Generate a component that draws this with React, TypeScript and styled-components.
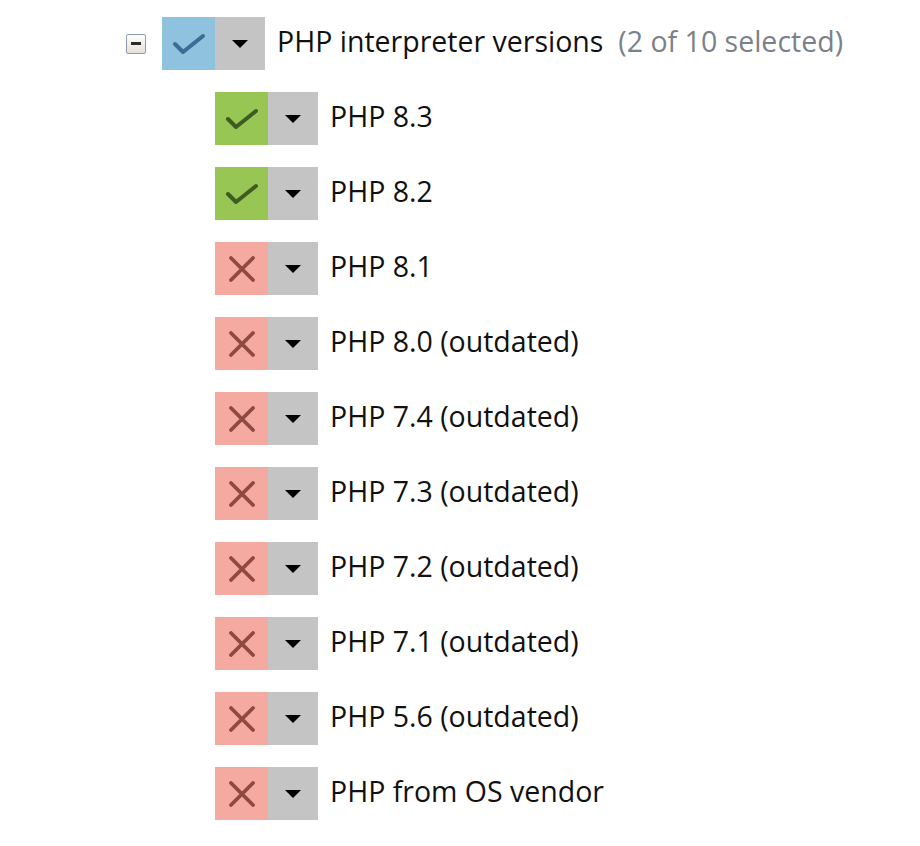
import React from "react";
import styled, { createGlobalStyle } from "styled-components";

type State = "on" | "off" | "partial";

const versions: { label: string; state: State }[] = [
    { label: "PHP 8.3", state: "on" },
    { label: "PHP 8.2", state: "on" },
    { label: "PHP 8.1", state: "off" },
    { label: "PHP 8.0 (outdated)", state: "off" },
    { label: "PHP 7.4 (outdated)", state: "off" },
    { label: "PHP 7.3 (outdated)", state: "off" },
    { label: "PHP 7.2 (outdated)", state: "off" },
    { label: "PHP 7.1 (outdated)", state: "off" },
    { label: "PHP 5.6 (outdated)", state: "off" },
    { label: "PHP from OS vendor", state: "off" },
]

const colors: Record<State, { bg: string; mark: string }> = {
    on: { bg: "#98c655", mark: "#3e5b22" },
    off: { bg: "#f4a9a1", mark: "#8e4a42" },
    partial: { bg: "#8fc2de", mark: "#3a6d95" },
}

const Mark = ({ state }: { state: State }) => {
    const color = colors[state].mark
    if (state === "off") {
        return (
            <svg width="26" height="26" viewBox="0 0 26 26">
                <path d="M2 2 L24 24 M24 2 L2 24" stroke={color} strokeWidth="3.8" strokeLinecap="round" fill="none" />
            </svg>
        )
    }
    return (
        <svg width="34" height="22" viewBox="0 0 34 22">
            <path d="M3 11 L11 19 L31 3" stroke={color} strokeWidth="4" strokeLinecap="round" strokeLinejoin="round" fill="none" />
        </svg>
    )
}

const Toggle = ({ state }: { state: State }) => (
    <ToggleWrap>
        <StateBox state={state}>
            <Mark state={state} />
        </StateBox>
        <MenuBox>
            <Caret />
        </MenuBox>
    </ToggleWrap>
)

const App = () => {
    return (
        <>
            <GlobalStyle />
            <Tree>
                <HeaderRow>
                    <Collapse>
                        <CollapseBar />
                    </Collapse>
                    <Toggle state="partial" />
                    <Label>
                        PHP interpreter versions<Count>(2 of 10 selected)</Count>
                    </Label>
                </HeaderRow>
                <Children>
                    {versions.map((v, index) => (
                        <Row key={index}>
                            <Toggle state={v.state} />
                            <Label>{v.label}</Label>
                        </Row>
                    ))}
                </Children>
            </Tree>
        </>
    )
}

export default App

const GlobalStyle = createGlobalStyle`
body {
    margin: 0;
    background: #ffffff;
    font-family: "Open Sans", "Noto Sans", sans-serif;
}
`

const Tree = styled.div`
padding: 17px 0 0 126px;
display: flex;
flex-direction: column;
gap: 22px;
`

const HeaderRow = styled.div`
display: flex;
align-items: center;
`

const Collapse = styled.div`
width: 20px;
height: 20px;
box-sizing: border-box;
margin-right: 16px;
border: 1px solid #8d9bb0;
border-radius: 2px;
background: linear-gradient(#ffffff, #e4e1d6);
display: flex;
align-items: center;
justify-content: center;
`

const CollapseBar = styled.div`
width: 10px;
height: 3px;
background: #2b2b2b;
`

const Children = styled.div`
padding-left: 89px;
display: flex;
flex-direction: column;
gap: 22px;
`

const Row = styled.div`
display: flex;
align-items: center;
`

const ToggleWrap = styled.div`
display: flex;
height: 53px;
margin-right: 12px;
`

const StateBox = styled.div<{ state: State }>`
width: 53px;
height: 53px;
background: ${({ state }) => colors[state].bg};
display: flex;
align-items: center;
justify-content: center;
`

const MenuBox = styled.div`
width: 50px;
height: 53px;
background: #c4c4c4;
display: flex;
align-items: center;
justify-content: center;
`

const Caret = styled.div`
width: 0;
height: 0;
border-left: 8px solid transparent;
border-right: 8px solid transparent;
border-top: 8px solid #000000;
`

const Label = styled.span`
font-size: 28.5px;
color: #111111;
white-space: nowrap;
padding-bottom: 5px;
`

const Count = styled.span`
margin-left: 15px;
color: #7b8188;
`
